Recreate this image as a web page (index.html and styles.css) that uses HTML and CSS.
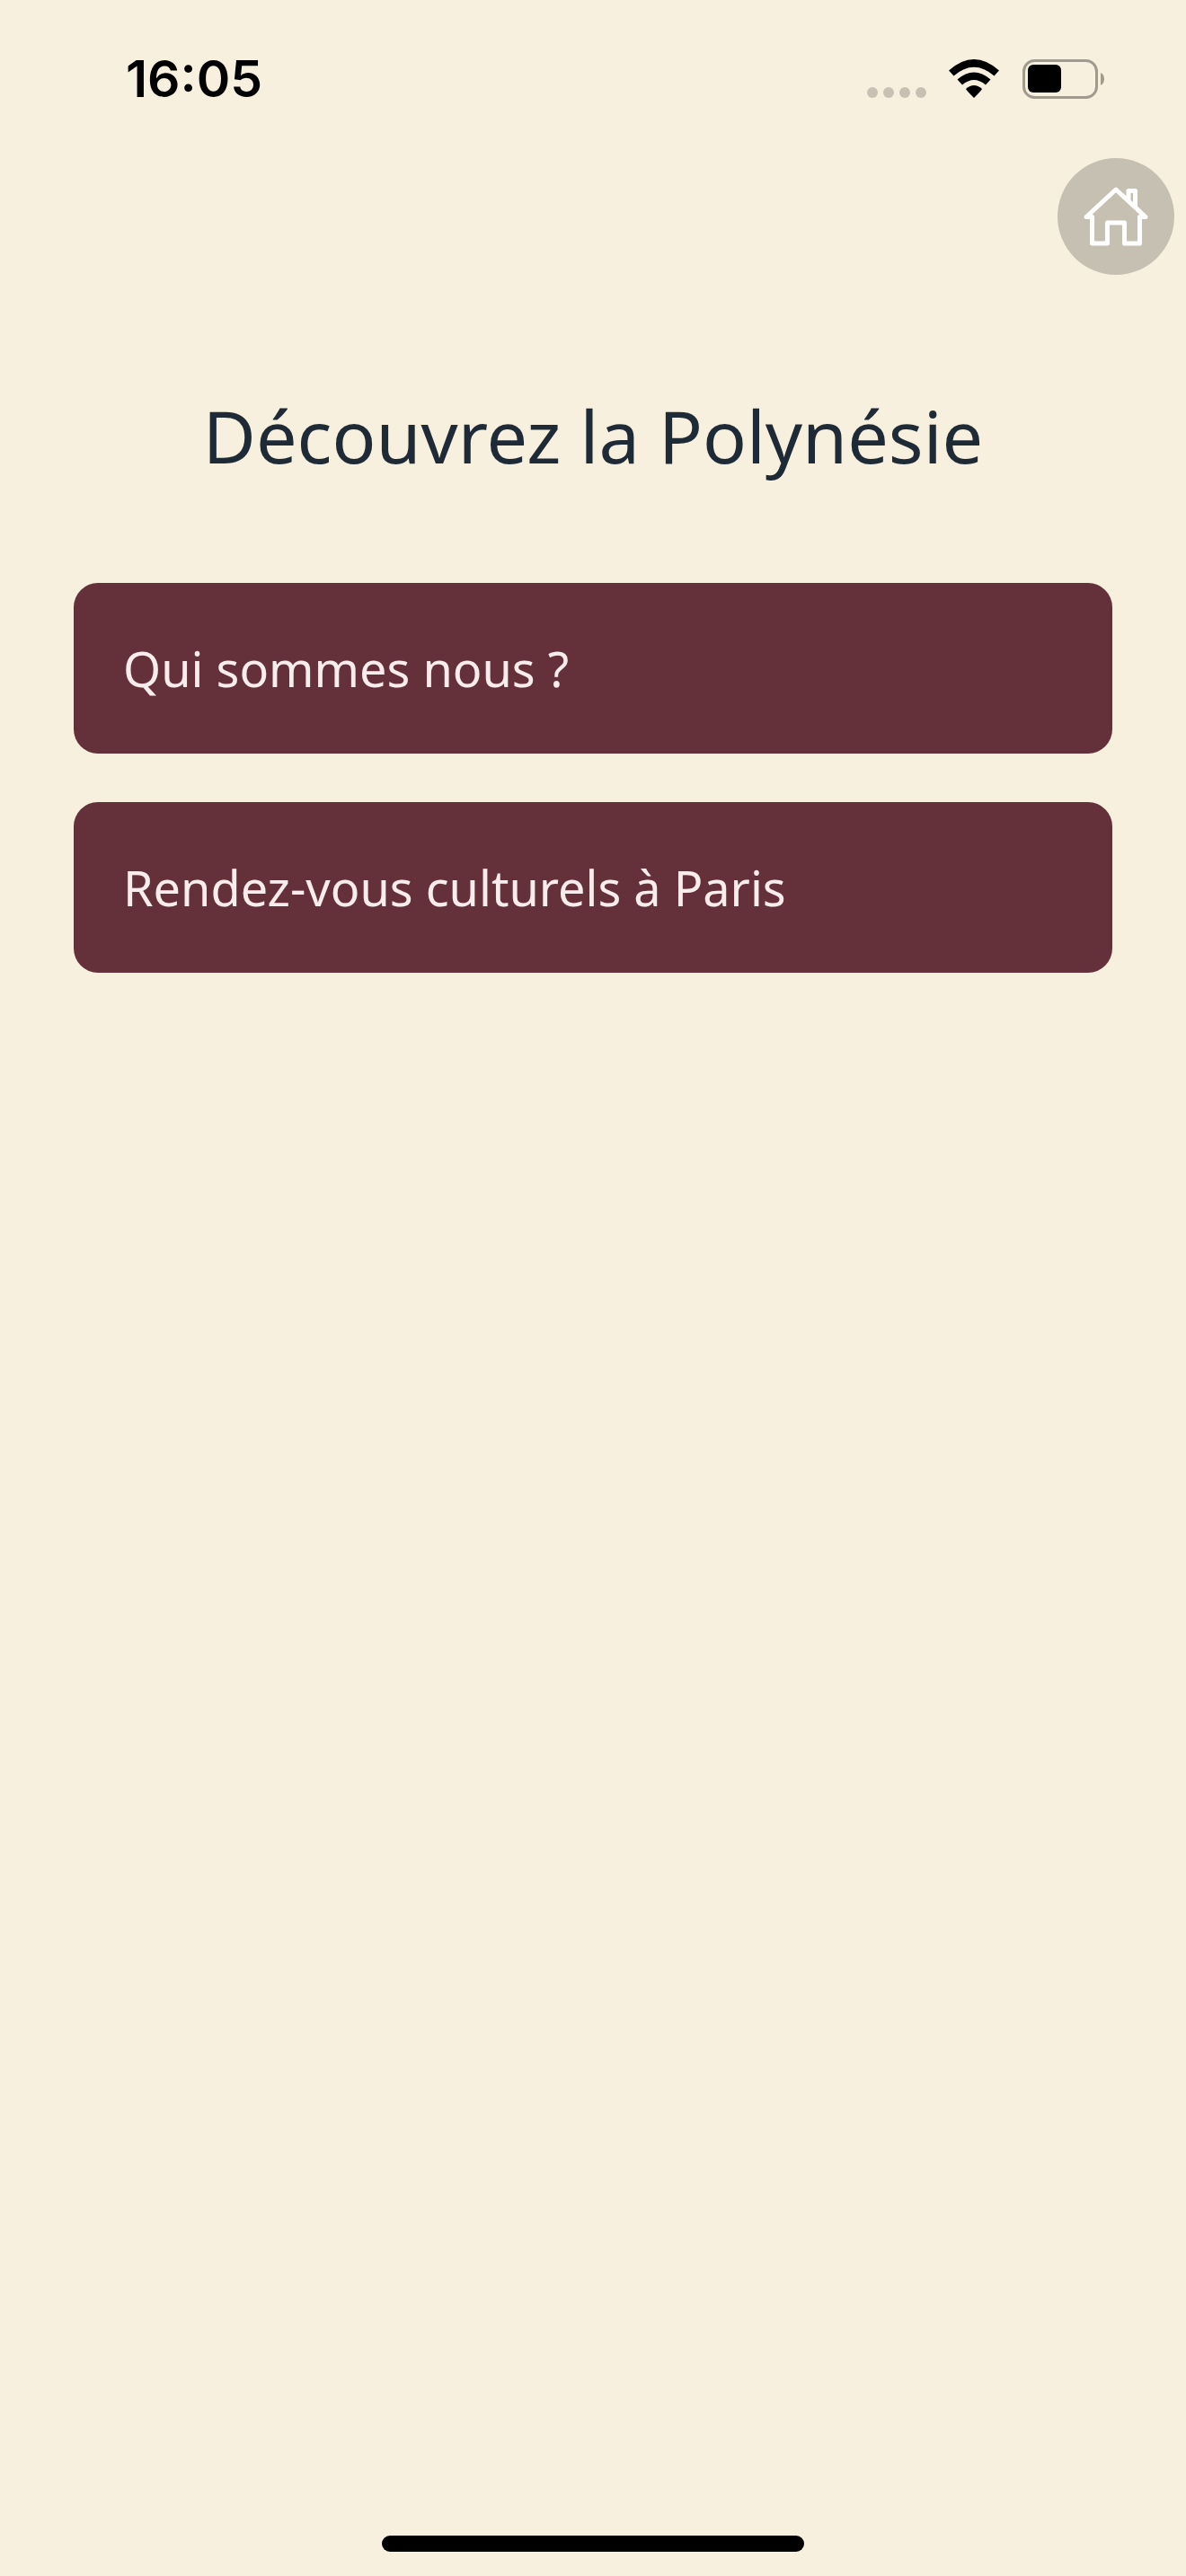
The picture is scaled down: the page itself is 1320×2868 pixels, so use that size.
FILE: index.html
```html
<!DOCTYPE html>
<html lang="fr">
<head>
  <meta charset="UTF-8">
  <meta name="viewport" content="width=device-width, initial-scale=1.0">
  <title>Découvrez la Polynésie</title>
  <link rel="stylesheet" href="styles.css">
</head>
<body>
  <div class="status-bar">
    <span class="time">16:05</span>
    <div class="status-icons">
      <svg class="signal" width="66" height="44" viewBox="0 0 66 44" aria-hidden="true">
        <circle cx="6" cy="37" r="6"/>
        <circle cx="24" cy="37" r="6"/>
        <circle cx="42" cy="37" r="6"/>
        <circle cx="60" cy="37" r="6"/>
      </svg>
      <svg class="wifi" width="56" height="44" viewBox="0 0 56 44" aria-hidden="true">
        <path d="M0 12.5 Q28 -12.5 56 12.5 L50.5 18.5 Q28 -1 5.5 18.5 Z"/>
        <path d="M9.5 22.5 Q28 6.5 46.5 22.5 L41 28.5 Q28 17.5 15 28.5 Z"/>
        <path d="M19 33 Q28 25 37 33 Q37 34 28 43 Q19 34 19 33 Z"/>
      </svg>
      <svg class="battery" width="92" height="44" viewBox="0 0 92 44" aria-hidden="true">
        <rect class="battery-case" x="1.5" y="1.5" width="81" height="41" rx="12"/>
        <rect x="6" y="6" width="37" height="31" rx="6"/>
        <path class="battery-tip" d="M87 15 Q91 17 91 22 Q91 27 87 29 Z"/>
      </svg>
    </div>
  </div>

  <header class="top">
    <a href="#" class="home-btn" aria-label="Accueil">
      <svg width="72" height="68" viewBox="0 0 72 68" aria-hidden="true">
        <path d="M3 34.5 H9.5 V64 H26.5 V41 H45.5 V64 H62.5 V34.5 H69 L36 4 Z"/>
        <path d="M50 15 V5.5 H57.5 V23"/>
      </svg>
    </a>
  </header>

  <main class="content">
    <h1>Découvrez la Polynésie</h1>
    <nav class="menu">
      <a href="#" class="menu-item">Qui sommes nous ?</a>
      <a href="#" class="menu-item">Rendez-vous culturels à Paris</a>
    </nav>
  </main>

  <div class="home-indicator"></div>
</body>
</html>
```
FILE: styles.css
```css
* {
  box-sizing: border-box;
}

body {
  margin: 0;
  min-height: 100vh;
  display: flex;
  flex-direction: column;
  background: #f8f0df;
  color: #1f2a37;
  font-family: 'Noto Sans', sans-serif;
}

.status-bar {
  display: flex;
  justify-content: space-between;
  align-items: center;
  padding: 52px 90px 52px 140px;
  color: #000;
}

.time {
  font-family: Inter, sans-serif;
  font-size: 57px;
  font-weight: 600;
  line-height: 72px;
}

.status-icons {
  display: flex;
  align-items: center;
}

.signal {
  fill: #c8c1b3;
  margin-right: 25px;
}

.wifi {
  margin-right: 26px;
}

.battery-case {
  fill: none;
  stroke: #a19b8f;
  stroke-width: 3;
}

.battery-tip {
  fill: #a19b8f;
}

.top {
  display: flex;
  justify-content: flex-end;
  padding: 0 13px;
}

.home-btn {
  display: flex;
  align-items: center;
  justify-content: center;
  width: 130px;
  height: 130px;
  border-radius: 50%;
  background: #c6c0b2;
}

.home-btn svg {
  fill: none;
  stroke: #fff;
  stroke-width: 5;
  stroke-linejoin: round;
  stroke-linecap: round;
}

.content {
  padding: 123px 82px 0;
}

h1 {
  margin: 0 0 108px;
  font-size: 81px;
  font-weight: 400;
  line-height: 112px;
  text-align: center;
}

.menu {
  display: flex;
  flex-direction: column;
  gap: 54px;
}

.menu-item {
  padding: 58px 55px;
  border-radius: 27px;
  background: #64313a;
  color: #f9ecec;
  font-size: 54px;
  line-height: 74px;
  text-decoration: none;
}

.home-indicator {
  width: 470px;
  height: 18px;
  margin: auto auto 27px;
  border-radius: 9px;
  background: #000;
}
```
